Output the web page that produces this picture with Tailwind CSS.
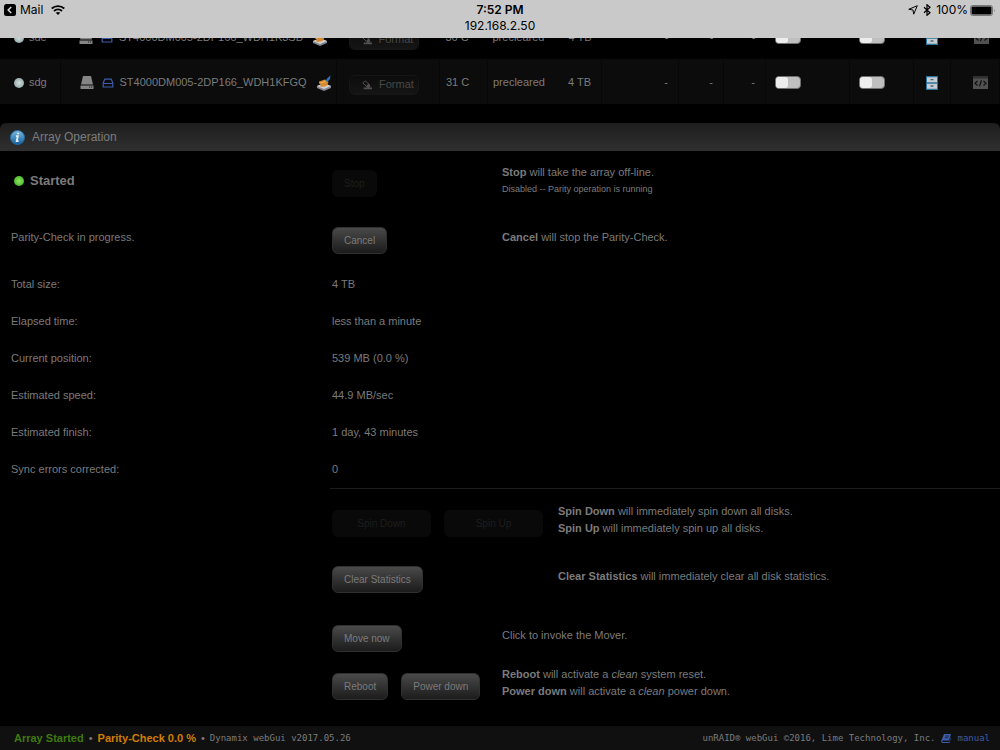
<!DOCTYPE html>
<html lang="en">

<head>
    <meta charset="UTF-8">
    <meta name="viewport" content="width=device-width, initial-scale=1.0">
    <title>Tower/Main</title>
    <script src="https://cdn.jsdelivr.net/npm/@tailwindcss/browser@4"></script>
</head>

<body class="bg-black text-[#7b7b7b] text-[11px] leading-[17px] font-['Liberation_Sans',Arial,sans-serif] min-h-screen flex flex-col">
    <!-- Shared icons -->
    <svg class="hidden">
        <symbol id="drive" viewBox="0 0 14 13">
            <path d="M3 0h8l2 8.500H1z" fill="#858585" />
            <path d="M.5 9.500h13V13H.5z" fill="#858585" />
            <path d="M9 11h1.200M11 11h1.200" stroke="#222" />
        </symbol>
        <symbol id="hdd" viewBox="0 0 12 10">
            <path d="M1.200 5 2.700 1.200h6.600L10.800 5v4H1.200zM1.200 5.500h9.600" fill="none" stroke="#3c5ca8" stroke-width="1.200" />
        </symbol>
        <symbol id="broom" viewBox="0 0 16 16">
            <path d="M1 11 8 8.500l7 2.500v2L8 16l-7-3z" fill="#85858f" />
            <path d="M1 11 8 8l7 3-7 3z" fill="#cfcfd3" />
            <path d="M3 6.500 9 4.500l3.500 2.500-1.500 3.500c-2.500 1.500-5 1.500-7 .7l1-2-2-.7z" fill="#d98a2b" />
            <path d="m4.500 8 5-1.500" stroke="#f3b959" />
            <path d="m9.500 6 2-3L14.500.5 14 4l-2.500 3z" fill="#2f72b8" />
        </symbol>
        <symbol id="eraser" viewBox="0 0 14 12">
            <path d="M2 3.500 5 1l5.500 5-3 3z" fill="none" stroke="#505050" stroke-width="1.200" />
            <path d="M6.500 6.500 8.500 4.500l3 3L9.500 9H13v2H3V9h4.500z" fill="#505050" />
        </symbol>
        <symbol id="cabinet" viewBox="0 0 12 14">
            <path d="M0 0h12v14H0z" fill="#2c7399" />
            <path d="M1 1.200h10v5H1zM1 7.800h10v5H1z" fill="#c3cdd3" />
            <path d="M4.500 3.700h3M4.500 10h3" stroke="#59666e" stroke-width="1.300" />
        </symbol>
        <symbol id="code" viewBox="0 0 15 13">
            <path d="M0 0h15v13H0z" fill="#515151" />
            <path d="M0 0h15v2.500H0z" fill="#303030" />
            <path d="M4.500 5 2 7.200l2.500 2.300M10.500 5 13 7.200l-2.500 2.300M8.500 4.200l-2 6" fill="none" stroke="#111" stroke-width="1.200" />
        </symbol>
    </svg>

    <!-- Tablet status bar, the page scrolls beneath it -->
    <header class="fixed top-0 inset-x-0 z-10 h-[38px] bg-[#c9c9c9] text-black text-[12px] leading-[16px] font-[Inter,sans-serif] grid grid-cols-[1fr_auto_1fr] items-start px-1 pt-0.5">
        <div class="flex items-center gap-1">
            <svg class="w-3 h-3" viewBox="0 0 12 12">
                <rect width="12" height="12" rx="2.500" />
                <path d="M7.200 3 4.200 6l3 3" fill="none" stroke="#ddd" stroke-width="1.500" />
            </svg>
            <span>Mail</span>
            <svg class="w-3.5 h-2.5 ml-1" viewBox="0 0 14 10" fill="none" stroke="#000" stroke-width="1.800">
                <path d="M.7 3.500c3.600-3.300 9-3.300 12.600 0M3 6c2.300-2 5.700-2 8 0" />
                <path d="M4.800 7.700c1.300-1 3.100-1 4.400 0L7 10z" fill="#000" stroke="none" />
            </svg>
        </div>
        <div class="text-center">
            <div class="font-semibold">7:52 PM</div>
            <div>192.168.2.50</div>
        </div>
        <div class="flex items-center justify-end gap-1">
            <svg class="w-2.5 h-2.5" viewBox="0 0 10 10"><path d="M9.300.7.8 4.300 5 5l.7 4.200z" fill="none" stroke="#000" /></svg>
            <svg class="w-2.5 h-3" viewBox="0 0 10 12"><path d="m2 3.300 6 5.400-3 2.600V.7l3 2.600-6 5.400" fill="none" stroke="#000" stroke-width="1.200" /></svg>
            <span>100%</span>
            <svg class="w-[26px] h-[11px] -ml-0.5" viewBox="0 0 26 11">
                <rect x=".5" y=".5" width="22" height="10" rx="2" fill="none" stroke="#777" />
                <rect x="1.500" y="1.500" width="20" height="8" rx="1" />
                <path d="M24 4q1.500 1.500 0 3z" fill="#777" />
            </svg>
        </div>
    </header>

    <main class="pt-[14px] flex-1">
        <!-- Unassigned devices -->
        <table class="w-full table-fixed">
            <colgroup>
                <col class="w-[60px]">
                <col>
                <col class="w-[103px]">
                <col class="w-12">
                <col class="w-[66px]">
                <col class="w-12">
                <col class="w-[77px]">
                <col class="w-[45px]">
                <col class="w-[42px]">
                <col class="w-[84px]">
                <col class="w-16">
                <col class="w-[37px]">
                <col class="w-[49px]">
            </colgroup>
            <tbody class="[&_td]:p-0 [&_td]:pt-0.5 whitespace-nowrap">
                <tr class="h-[45px]">
                    <td>
                        <div class="flex items-center pl-3.5 gap-[5px]"><span class="size-2.5 rounded-full bg-radial from-[#d5dedf] to-[#7e9898]"></span>sde</div>
                    </td>
                    <td>
                        <div class="flex items-center pl-[19px]">
                            <svg class="w-3.5 h-[13px]"><use href="#drive" /></svg>
                            <svg class="w-3 h-2.5 ml-2"><use href="#hdd" /></svg>
                            <span class="ml-1.5">ST4000DM005-2DP166_WDH1K3SB</span>
                            <svg class="size-4 ml-[9px]"><use href="#broom" /></svg>
                        </div>
                    </td>
                    <td>
                        <button disabled class="flex items-center gap-1.5 h-5 w-[70px] mt-1 ml-3 pl-[11px] rounded-md border border-[#161616] bg-linear-to-b from-[#0c0c0c] to-[#151515] text-[#484848]">
                            <svg class="w-3 h-2.5"><use href="#eraser" /></svg>Format
                        </button>
                    </td>
                    <td class="pl-1.5!">36 C</td>
                    <td class="pl-[5px]!">precleared</td>
                    <td class="text-right pr-2.5!">4 TB</td>
                    <td class="text-right pr-2.5!">-</td>
                    <td class="text-right pr-2.5!">-</td>
                    <td class="text-right pr-2.5!">-</td>
                    <td class="pl-[9px]!"><input type="checkbox" aria-label="Auto mount sde" class="block appearance-none w-[26px] h-[13px] rounded-[4px] border border-[#707070] bg-[#bfbfbf] before:block before:w-1/2 before:h-full before:rounded-[3px] before:bg-[#ededed]"></td>
                    <td class="pl-[9px]!"><input type="checkbox" aria-label="Share sde" class="block appearance-none w-[26px] h-[13px] rounded-[4px] border border-[#707070] bg-[#bfbfbf] before:block before:w-1/2 before:h-full before:rounded-[3px] before:bg-[#ededed]"></td>
                    <td><svg class="w-3 h-3.5 mx-auto"><use href="#cabinet" /></svg></td>
                    <td><svg class="w-[15px] h-[13px] ml-auto mr-[11px]"><use href="#code" /></svg></td>
                </tr>
                <tr class="h-[45px] bg-[#0c0c0c] [&>td]:border-r [&>td]:border-[#070707]">
                    <td>
                        <div class="flex items-center pl-3.5 gap-[5px]"><span class="size-2.5 rounded-full bg-radial from-[#d5dedf] to-[#7e9898]"></span>sdg</div>
                    </td>
                    <td>
                        <div class="flex items-center pl-[19px]">
                            <svg class="w-3.5 h-[13px]"><use href="#drive" /></svg>
                            <svg class="w-3 h-2.5 ml-2"><use href="#hdd" /></svg>
                            <span class="ml-1.5">ST4000DM005-2DP166_WDH1KFGQ</span>
                            <svg class="size-4 ml-[9px]"><use href="#broom" /></svg>
                        </div>
                    </td>
                    <td>
                        <button disabled class="flex items-center gap-1.5 h-5 w-[70px] mt-1 ml-3 pl-[11px] rounded-md border border-[#161616] bg-linear-to-b from-[#0c0c0c] to-[#151515] text-[#484848]">
                            <svg class="w-3 h-2.5"><use href="#eraser" /></svg>Format
                        </button>
                    </td>
                    <td class="pl-1.5!">31 C</td>
                    <td class="pl-[5px]! border-r-0!">precleared</td>
                    <td class="text-right pr-2.5!">4 TB</td>
                    <td class="text-right pr-2.5!">-</td>
                    <td class="text-right pr-2.5!">-</td>
                    <td class="text-right pr-2.5!">-</td>
                    <td class="pl-[9px]!"><input type="checkbox" aria-label="Auto mount sdg" class="block appearance-none w-[26px] h-[13px] rounded-[4px] border border-[#707070] bg-[#bfbfbf] before:block before:w-1/2 before:h-full before:rounded-[3px] before:bg-[#ededed]"></td>
                    <td class="pl-[9px]!"><input type="checkbox" aria-label="Share sdg" class="block appearance-none w-[26px] h-[13px] rounded-[4px] border border-[#707070] bg-[#bfbfbf] before:block before:w-1/2 before:h-full before:rounded-[3px] before:bg-[#ededed]"></td>
                    <td><svg class="w-3 h-3.5 mx-auto"><use href="#cabinet" /></svg></td>
                    <td><svg class="w-[15px] h-[13px] ml-auto mr-[11px]"><use href="#code" /></svg></td>
                </tr>
            </tbody>
        </table>

        <!-- Array Operation -->
        <h2 class="flex items-center gap-[7px] h-7 mt-[19px] pl-2.5 rounded-t-md bg-linear-to-b from-[#1e1e1e] to-[#303030] text-[12px]">
            <svg class="size-[15px]" viewBox="0 0 15 15">
                <defs>
                    <linearGradient id="info" x2="0" y2="1">
                        <stop stop-color="#7dbbe0" />
                        <stop offset="1" stop-color="#1260a0" />
                    </linearGradient>
                </defs>
                <circle cx="7.500" cy="7.500" r="7" fill="url(#info)" stroke="#276a9c" />
                <path d="m8.300 2.800-.3 1.500M6 6.200h1.800L6.700 11h1.800" fill="none" stroke="#e4edf3" stroke-width="1.800" />
            </svg>
            Array Operation
        </h2>

        <div class="grid grid-cols-[321px_170px_1fr] items-center pl-[11px]">
            <div class="flex items-center gap-1.5 h-[59px] pl-[3px] text-[13px] font-bold"><span class="size-2.5 rounded-full bg-radial from-[#8ce65f] to-[#2ea811]"></span>Started</div>
            <div class="pt-1.5"><button disabled class="block h-[27px] px-3 rounded-md bg-[#090909] text-[10px] text-[#1e1e1e]">Stop</button></div>
            <div><b>Stop</b> will take the array off-line.<small class="block text-[9px]">Disabled -- Parity operation is running</small></div>

            <div class="flex items-center h-[55px]">Parity-Check in progress.</div>
            <div class="pt-1.5"><button class="block h-[27px] px-[11px] rounded-md border border-[#303030] bg-linear-to-b from-[#4a4a4a] to-[#1c1c1c] text-[10px]">Cancel</button></div>
            <div><b>Cancel</b> will stop the Parity-Check.</div>
        </div>

        <dl class="grid grid-cols-[321px_1fr] pl-[11px] pt-px leading-[37px]">
            <dt>Total size:</dt>
            <dd>4 TB</dd>
            <dt>Elapsed time:</dt>
            <dd>less than a minute</dd>
            <dt>Current position:</dt>
            <dd>539 MB (0.0 %)</dd>
            <dt>Estimated speed:</dt>
            <dd>44.9 MB/sec</dd>
            <dt>Estimated finish:</dt>
            <dd>1 day, 43 minutes</dd>
            <dt>Sync errors corrected:</dt>
            <dd>0</dd>
        </dl>

        <hr class="ml-[330px] border-[#1c1c1c]">

        <div class="grid grid-cols-[226px_1fr] auto-rows-[56px] items-center pl-[332px] pt-[3px]">
            <div class="flex gap-[13px] pt-1.5">
                <button disabled class="h-[27px] w-[99px] rounded-md bg-[#090909] text-[10px] text-[#1e1e1e]">Spin Down</button>
                <button disabled class="h-[27px] w-[99px] rounded-md bg-[#090909] text-[10px] text-[#1e1e1e]">Spin Up</button>
            </div>
            <div><b>Spin Down</b> will immediately spin down all disks.<br><b>Spin Up</b> will immediately spin up all disks.</div>
            <div class="pt-1.5"><button class="block h-[27px] px-[11px] rounded-md border border-[#303030] bg-linear-to-b from-[#4a4a4a] to-[#1c1c1c] text-[10px]">Clear Statistics</button></div>
            <div><b>Clear Statistics</b> will immediately clear all disk statistics.</div>
        </div>

        <div class="grid grid-cols-[170px_1fr] gap-y-3.5 items-center pl-[332px] pt-[15px]">
            <div class="pt-1.5"><button class="block h-[27px] px-[11px] rounded-md border border-[#303030] bg-linear-to-b from-[#4a4a4a] to-[#1c1c1c] text-[10px]">Move now</button></div>
            <div>Click to invoke the Mover.</div>
            <div class="flex gap-[13px] pt-1.5">
                <button class="h-[27px] px-[11px] rounded-md border border-[#303030] bg-linear-to-b from-[#4a4a4a] to-[#1c1c1c] text-[10px]">Reboot</button>
                <button class="h-[27px] px-[11px] rounded-md border border-[#303030] bg-linear-to-b from-[#4a4a4a] to-[#1c1c1c] text-[10px]">Power down</button>
            </div>
            <div><b>Reboot</b> will activate a <i>clean</i> system reset.<br><b>Power down</b> will activate a <i>clean</i> power down.</div>
        </div>
    </main>

    <footer class="flex items-center justify-between h-6 pl-3.5 pr-2.5 bg-[#101010]">
        <div class="flex items-center gap-[5px]">
            <b class="text-[#3f7a0c]">Array Started</b>
            <span>•</span>
            <b class="text-[#d07c00]">Parity-Check 0.0 %</b>
            <span>•</span>
            <span class="text-[9px] font-['DejaVu_Sans_Mono',monospace]">Dynamix webGui v2017.05.26</span>
        </div>
        <div class="flex items-center gap-1.5 text-[9px] font-['DejaVu_Sans_Mono',monospace]">
            <span>unRAID® webGui ©2016, Lime Technology, Inc.</span>
            <a href="#" class="flex items-center gap-1.5 text-[#3c5ca8]">
                <svg class="w-2.5 h-[9px]" viewBox="0 0 10 9"><path d="M3 0h7L8 6.500H1.500Q1 8 2 8h6.300L10 2.500V4L8.500 9H1.500Q-.3 8.500.3 6.500z" fill="#3c5ca8" /><path d="M4.300 2h3.500M3.800 3.700h3.500" stroke="#111" stroke-width=".7" /></svg>
                manual
            </a>
        </div>
    </footer>
</body>

</html>
